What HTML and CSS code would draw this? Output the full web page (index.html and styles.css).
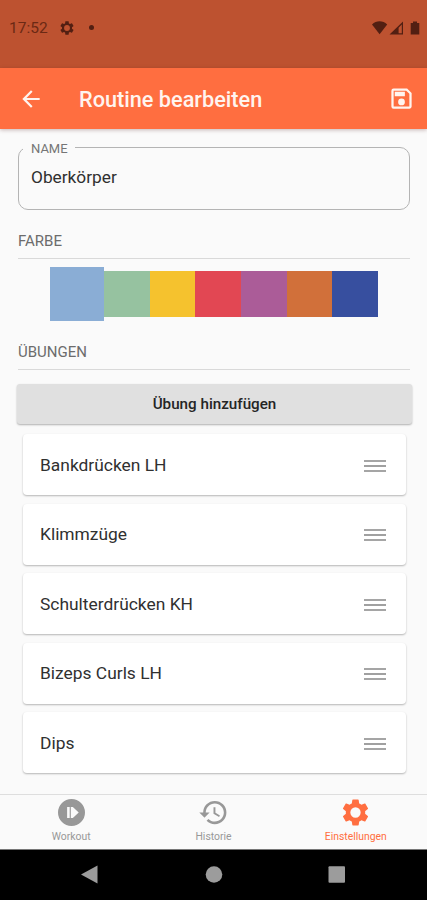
FILE: index.html
```html
<!DOCTYPE html>
<html lang="de">
<head>
<meta charset="utf-8">
<title>Routine bearbeiten</title>
<link rel="stylesheet" href="styles.css">
</head>
<body>
<div class="screen">
  <div class="status">
    <span class="clock">17:52</span>
    <svg class="status-gear" viewBox="0 0 24 24"><path fill-rule="evenodd" d="M19.43 12.98c.04-.32.07-.64.07-.98s-.03-.66-.07-.98l2.11-1.65c.19-.15.24-.42.12-.64l-2-3.46c-.12-.22-.39-.3-.61-.22l-2.49 1c-.52-.4-1.08-.73-1.69-.98l-.38-2.65C14.46 2.18 14.25 2 14 2h-4c-.25 0-.46.18-.49.42l-.38 2.65c-.61.25-1.17.59-1.69.98l-2.49-1c-.23-.09-.49 0-.61.22l-2 3.46c-.13.22-.07.49.12.64l2.11 1.65c-.04.32-.07.65-.07.98s.03.66.07.98l-2.11 1.65c-.19.15-.24.42-.12.64l2 3.46c.12.22.39.3.61.22l2.49-1c.52.4 1.08.73 1.69.98l.38 2.65c.03.24.24.42.49.42h4c.25 0 .46-.18.49-.42l.38-2.65c.61-.25 1.17-.59 1.69-.98l2.49 1c.23.09.49 0 .61-.22l2-3.46c.12-.22.07-.49-.12-.64zM12 16.400a4.400 4.400 0 1 1 0-8.800 4.400 4.400 0 0 1 0 8.800z"/></svg>
    <span class="status-dot"></span>
    <svg class="status-signals" viewBox="0 0 50 16">
      <path d="M1 4.500C5.200.3 12 .3 16.200 4.500L8.600 14.300z"/>
      <path fill-rule="evenodd" d="M32 1.500V14.500H18.500zM30.800 4.600L27.600 7.800V13.300H30.800z"/>
      <path d="M42 1.500h4V3h2.300v11.500h-8.600V3H42z"/>
    </svg>
  </div>
  <header class="appbar">
    <svg class="back" viewBox="0 0 24 24"><path d="M20 11H7.830l5.590-5.590L12 4l-8 8 8 8 1.410-1.410L7.830 13H20z"/></svg>
    <h1>Routine bearbeiten</h1>
    <svg class="save" viewBox="0 0 24 24"><path fill-rule="evenodd" d="M17 3H5a2 2 0 0 0-2 2v14a2 2 0 0 0 2 2h14c1.100 0 2-.9 2-2V7zM19 19H5V5h11.170L19 7.830zM12 12a3 3 0 1 0 0 6 3 3 0 0 0 0-6zM6 6h9v4H6z"/></svg>
  </header>
  <main>
    <fieldset class="field">
      <legend>NAME</legend>
      <div class="value">Oberkörper</div>
    </fieldset>
    <h2 class="section color-title">FARBE</h2>
    <div class="swatches">
      <span class="swatch blue selected"></span><span class="swatch green"></span><span class="swatch yellow"></span><span class="swatch red"></span><span class="swatch purple"></span><span class="swatch orange"></span><span class="swatch navy"></span>
    </div>
    <h2 class="section">ÜBUNGEN</h2>
    <button class="add">Übung hinzufügen</button>
    <ul class="list">
      <li><span>Bankdrücken LH</span><i class="handle"></i></li>
      <li><span>Klimmzüge</span><i class="handle"></i></li>
      <li><span>Schulterdrücken KH</span><i class="handle"></i></li>
      <li><span>Bizeps Curls LH</span><i class="handle"></i></li>
      <li><span>Dips</span><i class="handle"></i></li>
    </ul>
  </main>
  <nav class="tabs">
    <a class="tab"><svg viewBox="0 0 24 24"><path fill-rule="evenodd" d="M12 0a12 12 0 1 0 0 24 12 12 0 0 0 0-24zM8.100 7.200h2.300v9.600H8.100zM11.400 7.200h1.800l5.200 4.800-5.200 4.800h-1.800z"/></svg><span>Workout</span></a>
    <a class="tab"><svg class="history" viewBox="0 0 24 24"><path d="M13 3a9 9 0 0 0-9 9H1l3.890 3.890.07.14L9 12H6c0-3.870 3.130-7 7-7s7 3.130 7 7-3.130 7-7 7c-1.930 0-3.680-.79-4.940-2.060l-1.420 1.420A8.954 8.954 0 0 0 13 21a9 9 0 0 0 0-18zm-1 5v5l4.280 2.540.72-1.210-3.500-2.080V8z"/></svg><span>Historie</span></a>
    <a class="tab active"><svg class="gear" viewBox="0 0 24 24"><path fill-rule="evenodd" d="M19.430 12.980c.04-.32.07-.64.07-.98s-.03-.66-.07-.98l2.110-1.650c.19-.15.24-.42.12-.64l-2-3.460c-.12-.22-.39-.3-.61-.22l-2.490 1c-.52-.4-1.080-.73-1.690-.98l-.38-2.650C14.460 2.180 14.250 2 14 2h-4c-.25 0-.46.18-.49.42l-.38 2.650c-.61.25-1.170.59-1.690.98l-2.490-1c-.23-.09-.49 0-.61.22l-2 3.460c-.13.22-.07.49.12.64l2.110 1.650c-.04.32-.07.65-.07.98s.03.66.07.98l-2.110 1.650c-.19.15-.24.42-.12.64l2 3.460c.12.22.39.3.61.22l2.490-1c.52.4 1.080.73 1.690.98l.38 2.650c.03.24.24.42.49.42h4c.25 0 .46-.18.49-.42l.38-2.650c.61-.25 1.170-.59 1.690-.98l2.490 1c.23.09.49 0 .61-.22l2-3.460c.12-.22.07-.49-.12-.64zM12 16a4 4 0 1 1 0-8 4 4 0 0 1 0 8z"/></svg><span>Einstellungen</span></a>
  </nav>
  <div class="system">
    <svg viewBox="0 0 427 51"><path d="M81 25.500L97.500 16.500V34.500z"/><circle cx="214" cy="25.500" r="8.300"/><rect x="328.500" y="17.300" width="16.500" height="16.500" rx="1"/></svg>
  </div>
</div>
</body>
</html>
```
FILE: styles.css
```css
* { box-sizing: border-box; }
body {
  margin: 0;
  font-family: Roboto, "Liberation Sans", sans-serif;
  color: #303030;
  background: #fafafa;
}
.screen {
  display: flex;
  flex-direction: column;
  width: 427px;
  height: 900px;
  overflow: hidden;
}
svg { display: block; fill: currentColor; flex: none; }
.status {
  display: flex;
  align-items: center;
  height: 68px;
  padding: 0 6px 13px 9px;
  color: #521f12;
  background: #bd5230;
}
.clock { width: 50px; font-size: 15.500px; color: #6b2914; }
.status-gear { width: 16px; height: 16px; }
.status-dot {
  width: 5px;
  height: 5px;
  margin-left: 13.500px;
  border-radius: 50%;
  background: currentColor;
}
.status-signals { width: 50px; height: 16px; margin-left: auto; }
.appbar {
  display: flex;
  align-items: center;
  height: 61px;
  padding: 0 12px 0 18px;
  color: #fff4ef;
  background: #ff6e40;
  box-shadow: 0 1px 4px rgba(80, 20, 20, 0.3);
  z-index: 1;
}
.back { width: 26px; height: 26px; }
h1 { margin: 2px auto 0 35px; font-size: 21.7px; font-weight: 500; line-height: 26px; }
.save { width: 27px; height: 27px; }
main { flex: 1; padding: 12px 17px 0 18px; }
.field {
  height: 69px;
  margin: 0;
  padding: 0 0 0 4px;
  border: 1px solid #b4b4b4;
  border-radius: 10px;
}
.field legend { padding: 3px 7px 0 8px; font-size: 13px; line-height: 10px; color: #757575; }
.value { padding: 12px 8px; font-size: 17.300px; line-height: 22px; }
.section {
  height: 27px;
  margin: 0;
  border-bottom: 1px solid #d9d9d9;
  font-size: 15px;
  font-weight: 400;
  line-height: 18px;
  color: #6c6c6c;
}
.color-title { margin-top: 22px; }
.swatches {
  display: flex;
  align-items: center;
  justify-content: center;
  height: 54px;
  margin: 8px 0 22px;
}
.swatch { width: 45.700px; height: 46px; }
.selected { width: 54px; height: 54px; }
.blue { background: #8aadd5; }
.green { background: #96c2a0; }
.yellow { background: #f5c22e; }
.red { background: #e24753; }
.purple { background: #ab5c98; }
.orange { background: #d1703a; }
.navy { background: #374f9f; }
.add {
  display: block;
  width: 395px;
  height: 40px;
  margin: 14px 0 0 -1px;
  padding: 0;
  border: 0;
  border-radius: 3px;
  background: #e0e0e0;
  box-shadow: 0 1px 2px rgba(0, 0, 0, 0.3);
  font: 500 15.200px/40px Roboto, "Liberation Sans", sans-serif;
  color: #252525;
}
.list {
  display: grid;
  gap: 8.500px;
  margin: 10px 4px 0 5px;
  padding: 0;
  list-style: none;
}
.list li {
  display: flex;
  align-items: center;
  justify-content: space-between;
  height: 61px;
  padding: 0 20px 0 17px;
  border-radius: 4px;
  background: #fff;
  box-shadow: 0 1px 2px rgba(0, 0, 0, 0.28);
  font-size: 17.400px;
}
.handle {
  width: 22px;
  height: 12px;
  margin-top: 2px;
  border-top: 2px solid #a5a5a5;
  border-bottom: 2px solid #a5a5a5;
  background: linear-gradient(#a0a0a0, #a0a0a0) center / 100% 2px no-repeat;
}
.tabs {
  display: grid;
  grid-template-columns: repeat(3, 1fr);
  height: 55px;
  border-top: 1px solid #dedede;
  font-size: 10.400px;
  color: #989898;
}
.tab { display: flex; flex-direction: column; align-items: center; padding-top: 4px; }
.tab svg { width: 27px; height: 27px; }
.tab .history { width: 31px; height: 31px; margin: -2px 0; }
.tab .gear { width: 31px; height: 31px; margin: -2px 0; }
.tab span { margin-top: 4px; line-height: 13px; }
.active { color: #ff6e40; }
.system { height: 51px; border-top: 1px solid #777; background: #000; color: #9c9c9c; }
.system svg { width: 427px; height: 51px; margin-top: -1px; }
```
